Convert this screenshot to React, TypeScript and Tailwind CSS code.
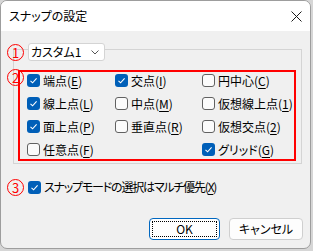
import React from "react";

type Item = { label: string; key: string; checked: boolean };

const columns: Item[][] = [
  [
    { label: "端点", key: "E", checked: true },
    { label: "線上点", key: "L", checked: true },
    { label: "面上点", key: "P", checked: true },
    { label: "任意点", key: "F", checked: false },
  ],
  [
    { label: "交点", key: "I", checked: true },
    { label: "中点", key: "M", checked: false },
    { label: "垂直点", key: "R", checked: false },
  ],
  [
    { label: "円中心", key: "C", checked: false },
    { label: "仮想線上点", key: "1", checked: false },
    { label: "仮想交点", key: "2", checked: false },
    { label: "グリッド", key: "G", checked: true },
  ],
];

function CheckBox({ checked }: { checked: boolean }) {
  if (checked) {
    return (
      <span className="flex h-[13px] w-[13px] shrink-0 items-center justify-center rounded-[3px] bg-[#005fb8]">
        <svg width="9" height="9" viewBox="0 0 9 9" fill="none" stroke="white" strokeWidth="1.1">
          <path d="M1.5 4.8 L3.6 6.8 L7.6 2.4" />
        </svg>
      </span>
    );
  }
  return <span className="block h-[13px] w-[13px] shrink-0 rounded-[3px] border border-[#616161] bg-[#fbfbfb]" />;
}

function Label({ text, k }: { text: string; k: string }) {
  return (
    <span className="whitespace-nowrap">
      {text}(<span className="underline underline-offset-2">{k}</span>)
    </span>
  );
}

function Marker({ n }: { n: number }) {
  return (
    <span className="flex h-[17px] w-[17px] items-center justify-center rounded-full border-[1.5px] border-[#ff0000] text-[13px] leading-none text-[#ff0000]">
      {n}
    </span>
  );
}

export default function App() {
  return (
    <div className="h-[251px] w-[313px] overflow-hidden bg-[#d6d6d6] font-['Noto_Sans_CJK_JP',sans-serif] text-[12px] text-black [font-feature-settings:'palt']">
      <div className="flex h-[249px] w-[311px] flex-col overflow-hidden rounded-[7px] border border-[#9d9d9d] bg-[#f0f0f0]">
        <div className="flex h-[30px] shrink-0 items-center justify-between bg-white pl-[8px] pr-[8px]">
          <span className="text-[12px]">スナップの設定</span>
          <svg width="11" height="11" viewBox="0 0 11 11" stroke="#1a1a1a" strokeWidth="1">
            <path d="M0.5 0.5 L10.5 10.5 M10.5 0.5 L0.5 10.5" />
          </svg>
        </div>

        <div className="relative flex flex-col">
          <div className="relative z-10 mt-[12px] flex h-[18px] items-center">
            <span className="ml-[6px] flex">
              <Marker n={1} />
            </span>
            <div className="ml-[4px] flex h-[18px] w-[77px] items-center justify-between rounded-[3px] border border-[#d4d4d4] bg-white pl-[2px] pr-[5px]">
              <span>カスタム1</span>
              <svg width="8" height="5" viewBox="0 0 8 5" fill="none" stroke="#555" strokeWidth="1">
                <path d="M0.5 0.5 L4 4 L7.5 0.5" />
              </svg>
            </div>
          </div>

          <div className="ml-[12px] mt-[-12px] h-[115px] w-[289px] border border-[#d4d4d4] pl-[4px] pt-[20px]">
            <div className="grid h-[91px] w-[278px] grid-cols-[88px_87px_1fr] border-2 border-[#ff0000] pl-[7px] pt-[1px]">
              {columns.map((col, ci) => (
                <div key={ci} className="flex flex-col">
                  {col.map((it) => (
                    <div key={it.label} className="flex h-[23px] items-start gap-[3px]">
                      <span className="mt-[1px] flex">
                        <CheckBox checked={it.checked} />
                      </span>
                      <span className="leading-[15px]">
                        <Label text={it.label} k={it.key} />
                      </span>
                    </div>
                  ))}
                </div>
              ))}
            </div>
          </div>

          <span className="absolute left-[6px] top-[38px] flex">
            <Marker n={2} />
          </span>

          <div className="mt-[14px] flex items-center">
            <span className="ml-[6px] flex">
              <Marker n={3} />
            </span>
            <span className="ml-[4px] flex">
              <CheckBox checked />
            </span>
            <span className="ml-[3px] tracking-[-1.2px]">
              <Label text="スナップモードの選択はマルチ優先" k="X" />
            </span>
          </div>

          <div className="mt-[22px] flex justify-end gap-[9px] pr-[7px]">
            <button className="flex h-[22px] w-[71px] items-center justify-center rounded-[4px] border border-[#0067c0] bg-white p-[2px]">
              <span className="flex h-full w-full items-center justify-center border border-dotted border-black">
                OK
              </span>
            </button>
            <button className="flex h-[22px] w-[74px] items-center justify-center rounded-[4px] border border-[#cfcfcf] bg-[#fdfdfd]">
              キャンセル
            </button>
          </div>
        </div>
      </div>
    </div>
  );
}
